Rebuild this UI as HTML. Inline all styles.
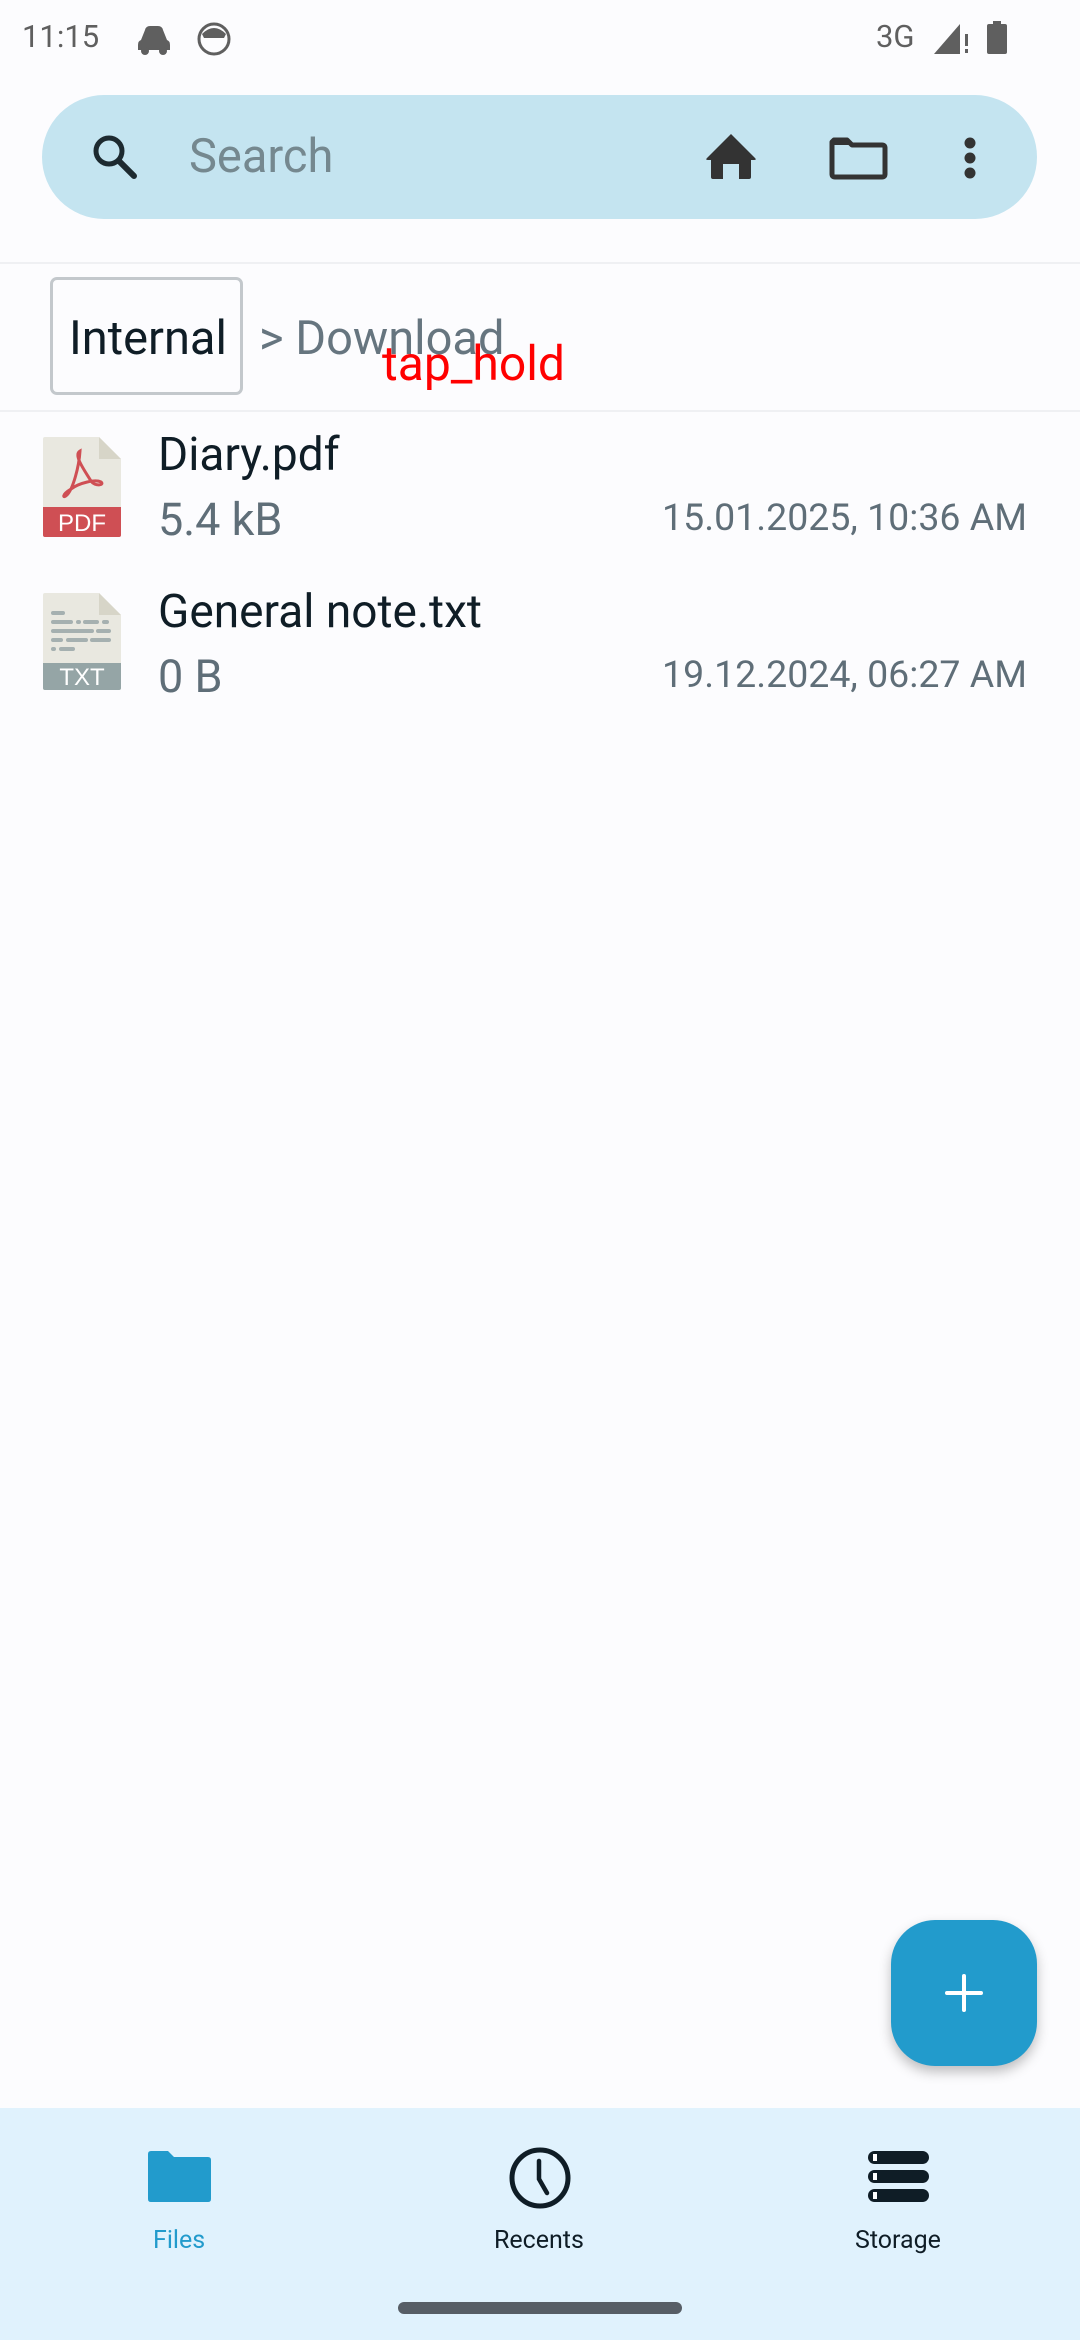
<!DOCTYPE html>
<html><head><meta charset="utf-8"><style>
*{margin:0;padding:0;box-sizing:border-box}
body{width:1080px;height:2340px;background:#fcfcfe;font-family:"Roboto","Liberation Sans",sans-serif;position:relative;overflow:hidden}
.a{position:absolute;white-space:nowrap}
</style></head><body>
<!-- status bar -->
<div class="a" style="left:22px;top:18px;font-size:31px;color:#5f5f5f;">11:15</div>
<svg class="a" style="left:136px;top:22px" width="120" height="34" viewBox="0 0 120 34">
<path d="M5 18 L9 8 Q10 4 14 4 L22 4 Q26 4 27 8 L31 18 Q34 19 34 23 L34 28 L2 28 L2 23 Q2 19 5 18Z" fill="#5f5f5f"/>
<circle cx="9" cy="29" r="4" fill="#5f5f5f"/><circle cx="27" cy="29" r="4" fill="#5f5f5f"/>
<circle cx="78" cy="17" r="15" fill="none" stroke="#5f5f5f" stroke-width="3"/>
<path d="M66 12 Q78 0 90 12 L88 16 L68 16Z" fill="#5f5f5f"/>
</svg>
<div class="a" style="left:876px;top:18px;font-size:31px;color:#5f5f5f;">3G</div>
<svg class="a" style="left:932px;top:20px" width="80" height="36" viewBox="0 0 80 36">
<path d="M2 34 L28 4 L28 34Z" fill="#5f5f5f"/><rect x="33" y="14" width="3" height="12" fill="#5f5f5f"/><rect x="33" y="29" width="3" height="4" fill="#5f5f5f"/>
<rect x="55" y="4" width="20" height="30" rx="2" fill="#5f5f5f"/><rect x="61" y="1" width="8" height="4" fill="#5f5f5f"/>
</svg>
<!-- search bar -->
<div class="a" style="left:42px;top:95px;width:995px;height:124px;border-radius:62px;background:#c4e4f0;"></div>
<svg class="a" style="left:88px;top:130px" width="54" height="54" viewBox="0 0 54 54">
<circle cx="21" cy="21" r="13" fill="none" stroke="#1d2a30" stroke-width="5"/><path d="M31 31 L46 46" stroke="#1d2a30" stroke-width="6" stroke-linecap="round"/>
</svg>
<div class="a" style="left:189px;top:129px;font-size:47px;color:#75888f;">Search</div>
<svg class="a" style="left:700px;top:128px" width="200" height="60" viewBox="0 0 200 60">
<path d="M31 6 L7 30 Q5 32 8 32 L11 32 L11 49 Q11 51 13 51 L23 51 L23 36 L39 36 L39 51 L49 51 Q51 51 51 49 L51 32 L54 32 Q57 32 55 30Z" fill="#333"/>
<path d="M134 12 L147 12 L152 17 L182 17 Q185 17 185 20 L185 46 Q185 49 182 49 L135 49 Q132 49 132 46 L132 14Z" fill="none" stroke="#333" stroke-width="5" stroke-linejoin="round"/>
<path d="M134 12 L147 12 L151 17 L134 17Z" fill="#333"/>
</svg>
<svg class="a" style="left:955px;top:130px" width="30" height="56" viewBox="0 0 30 56">
<circle cx="15" cy="13" r="5.5" fill="#333"/><circle cx="15" cy="28" r="5.5" fill="#333"/><circle cx="15" cy="43" r="5.5" fill="#333"/>
</svg>
<!-- breadcrumb -->
<div class="a" style="left:0;top:262px;width:1080px;height:2px;background:#eff0f3;"></div>
<div class="a" style="left:50px;top:277px;width:193px;height:118px;border:3px solid #c3c8cc;border-radius:7px;background:#fcfcfe;"></div>
<div class="a" style="left:69px;top:311px;font-size:47px;color:#0f1d26;">Internal</div>
<div class="a" style="left:259px;top:311px;font-size:47px;color:#66757f;">&gt; Download</div>
<div class="a" style="left:382px;top:335px;font-size:48px;color:#ff0000;">tap_hold</div>
<div class="a" style="left:0;top:410px;width:1080px;height:2px;background:#eff0f3;"></div>
<!-- rows -->
<svg class="a" style="left:43px;top:437px" width="78" height="100" viewBox="0 0 78 100">
<path d="M2 0 L56 0 L78 22 L78 98 Q78 100 76 100 L2 100 Q0 100 0 98 L0 2 Q0 0 2 0Z" fill="#e9e8e0"/>
<path d="M56 0 L78 22 L56 22Z" fill="#d7d5c8"/>
<path d="M0 70 L78 70 L78 98 Q78 100 76 100 L2 100 Q0 100 0 98Z" fill="#cf4f54"/>
<text x="39" y="94" font-family="Liberation Sans,sans-serif" font-size="24" fill="#fff" text-anchor="middle">PDF</text>
<path d="M37 14 C30 18 42 34 48 44 C52 50 62 48 58 45 C52 42 36 46 28 52 C18 58 20 62 24 58 C30 52 36 30 37 14Z" fill="none" stroke="#cf4f54" stroke-width="3"/>
</svg>
<div class="a" style="left:158px;top:428px;font-size:46px;color:#0f1d26;">Diary.pdf</div>
<div class="a" style="left:158px;top:493px;font-size:45px;color:#5f6e78;">5.4 kB</div>
<div class="a" style="right:53px;top:496px;font-size:37.5px;color:#5f6e78;">15.01.2025, 10:36 AM</div>

<svg class="a" style="left:43px;top:593px" width="78" height="97" viewBox="0 0 78 97">
<path d="M2 0 L56 0 L78 22 L78 95 Q78 97 76 97 L2 97 Q0 97 0 95 L0 2 Q0 0 2 0Z" fill="#e9e8e0"/>
<path d="M56 0 L78 22 L56 22Z" fill="#d7d5c8"/>
<path d="M0 70 L78 70 L78 95 Q78 97 76 97 L2 97 Q0 97 0 95Z" fill="#95a5a6"/>
<text x="39" y="92" font-family="Liberation Sans,sans-serif" font-size="24" fill="#fff" text-anchor="middle">TXT</text>
<g stroke="#a5b0b0" stroke-width="4" stroke-linecap="round">
<path d="M10 20 L20 20 M10 29 L28 29 M35 29 L36 29 M42 29 L54 29 M61 29 L64 29 M10 38 L49 38 M55 38 L66 38 M10 47 L18 47 M25 47 L43 47 M49 47 L66 47 M10 56 L11 56 M18 56 L30 56"/></g>
</svg>
<div class="a" style="left:158px;top:585px;font-size:46px;color:#0f1d26;">General note.txt</div>
<div class="a" style="left:158px;top:650px;font-size:45px;color:#5f6e78;">0 B</div>
<div class="a" style="right:53px;top:653px;font-size:37.5px;color:#5f6e78;">19.12.2024, 06:27 AM</div>
<!-- FAB -->
<div class="a" style="left:891px;top:1920px;width:146px;height:146px;border-radius:44px;background:#229bcc;box-shadow:0 6px 12px rgba(0,0,0,0.25);"></div>
<svg class="a" style="left:941px;top:1970px" width="46" height="46" viewBox="0 0 46 46"><path d="M23 6 L23 40 M6 23 L40 23" stroke="#fff" stroke-width="4" stroke-linecap="round"/></svg>
<!-- bottom nav -->
<div class="a" style="left:0;top:2108px;width:1080px;height:232px;background:#e0f2fd;"></div>
<svg class="a" style="left:148px;top:2151px" width="64" height="52" viewBox="0 0 64 52">
<path d="M3 0 L20 0 L26 6 L60 6 Q63 6 63 9 L63 48 Q63 51 60 51 L3 51 Q0 51 0 48 L0 3 Q0 0 3 0Z" fill="#229bcc"/></svg>
<div class="a" style="left:153px;top:2226px;font-size:25px;color:#229bcc;">Files</div>
<svg class="a" style="left:506px;top:2144px" width="68" height="68" viewBox="0 0 68 68">
<circle cx="34" cy="34" r="28" fill="none" stroke="#0f1d26" stroke-width="5"/><path d="M33 17 L33 35 L41 49" fill="none" stroke="#0f1d26" stroke-width="4.5" stroke-linecap="round"/></svg>
<div class="a" style="left:494px;top:2226px;font-size:25px;color:#0f1d26;">Recents</div>
<svg class="a" style="left:866px;top:2151px" width="64" height="52" viewBox="0 0 64 52">
<g fill="#0f1d26"><rect x="2" y="0" width="61" height="13" rx="6.5"/><rect x="2" y="19" width="61" height="13" rx="6.5"/><rect x="2" y="38" width="61" height="13" rx="6.5"/></g>
<g fill="#fff"><rect x="7" y="3" width="4" height="7"/><rect x="7" y="22" width="4" height="7"/><rect x="7" y="41" width="4" height="7"/></g></svg>
<div class="a" style="left:855px;top:2226px;font-size:25px;color:#0f1d26;">Storage</div>
<div class="a" style="left:398px;top:2302px;width:284px;height:12px;border-radius:6px;background:#575e66;"></div>
</body></html>
